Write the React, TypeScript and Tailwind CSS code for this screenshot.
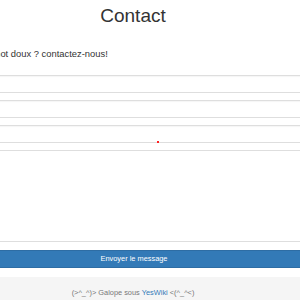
import React from "react";

const fieldClass =
  "block w-full h-[18px] border border-[#dedede] bg-white shadow-[inset_0_1px_1px_rgba(0,0,0,0.04)]";

export default function App() {
  return (
    <div
      className="w-[300px] h-[300px] overflow-hidden bg-white"
      style={{ fontFamily: '"Liberation Sans", Arial, sans-serif' }}
    >
      <div className="w-[372px] ml-[-53px] flex flex-col">
        <h1 className="mt-[5px] text-center text-[19px] leading-[21px] text-[#333]">
          Contact
        </h1>
        <p className="mt-[21px] pl-[31px] text-[9.4px] leading-[13px] text-[#333] whitespace-nowrap">
          Un mot doux ? contactez-nous!
        </p>
        <form className="mt-[15px] pl-[31px] flex flex-col">
          <input className={fieldClass} />
          <input className={fieldClass + " mt-[7px]"} />
          <div className="relative mt-[7px]">
            <input className={fieldClass} />
            <span className="absolute left-[179px] bottom-0 w-[2px] h-[2px] bg-[#f22]" />
          </div>
          <textarea className="block w-full h-[92px] mt-[7px] border border-[#dedede] bg-white resize-none" />
          <button
            type="button"
            className="mt-[8px] h-[18px] w-full bg-[#337ab7] border border-[#2e6da4] text-white text-[7.4px] leading-[16px] text-left"
          >
            <span className="block w-[310px] text-center">Envoyer le message</span>
          </button>
        </form>
      </div>
      <footer className="mt-[9px] h-[40px] bg-[#f5f5f5] pt-[11px]">
        <p className="w-[266px] text-center text-[7.4px] leading-[10px] text-[#777]">
          (&gt;^_^)&gt; Galope sous <span className="text-[#337ab7]">YesWiki</span> &lt;(^_^&lt;)
        </p>
      </footer>
    </div>
  );
}
